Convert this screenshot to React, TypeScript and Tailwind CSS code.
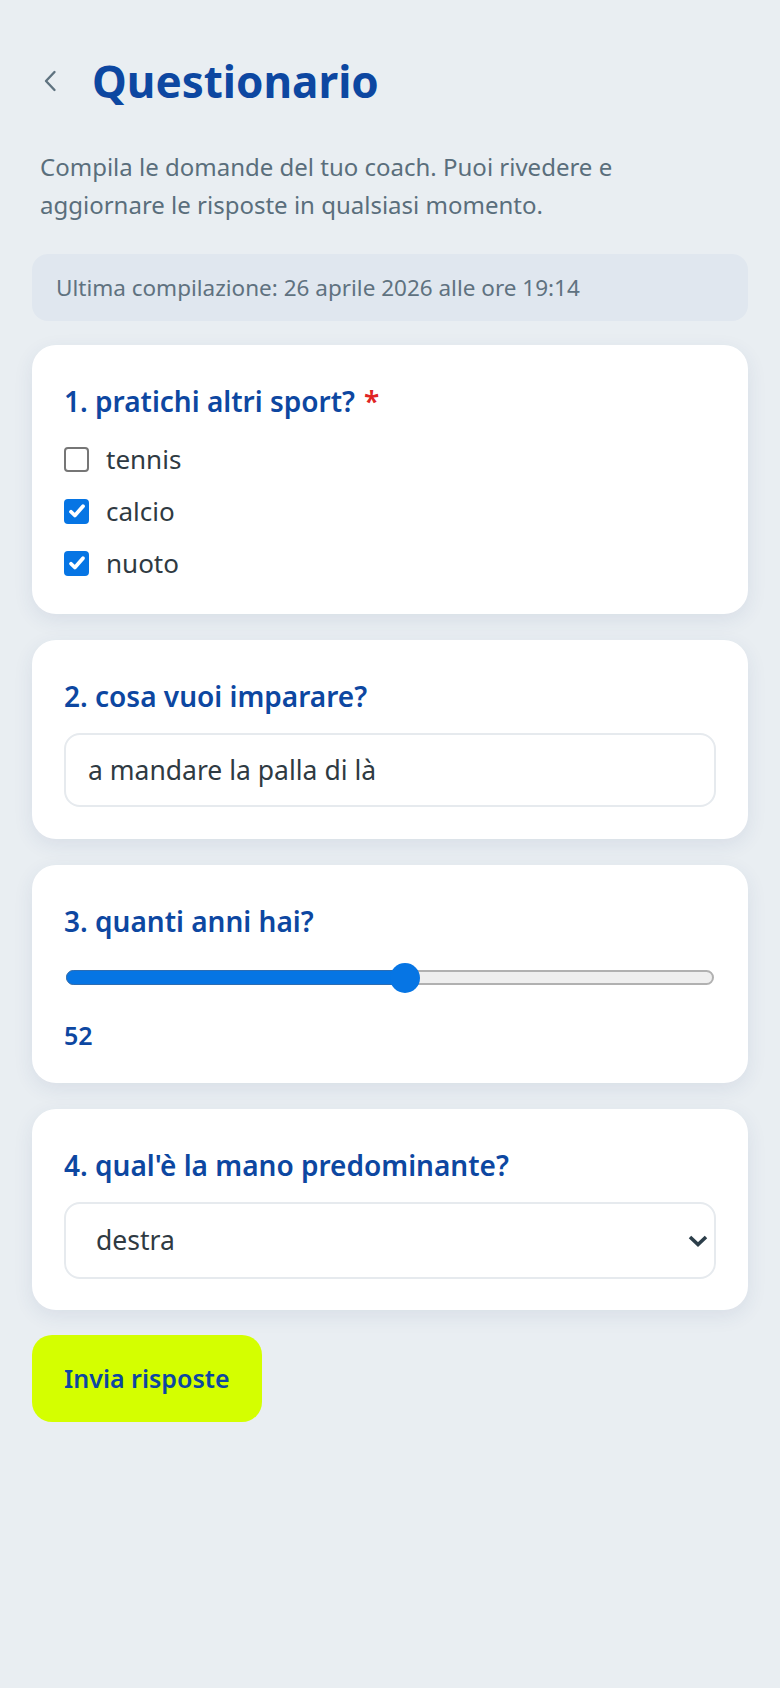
import { useState } from "react";

type Option = { label: string; checked: boolean };

const sports: Option[] = [
  { label: "tennis", checked: false },
  { label: "calcio", checked: true },
  { label: "nuoto", checked: true },
];

function Card({ children, className = "pb-8" }: { children: React.ReactNode; className?: string }) {
  return (
    <section
      className={`rounded-[24px] bg-white px-8 pt-[35px] shadow-[0_6px_20px_rgba(40,70,120,0.09)] ${className}`}
    >
      {children}
    </section>
  );
}

function QuestionTitle({ children, required }: { children: React.ReactNode; required?: boolean }) {
  return (
    <h2 className="text-[28px] font-semibold leading-[42px] text-[#0d47a1]">
      {children}
      {required && <span className="ml-[9px] text-[#e02424]">*</span>}
    </h2>
  );
}

function Checkbox({ checked }: { checked: boolean }) {
  if (!checked) {
    return <span className="h-[25px] w-[25px] shrink-0 rounded-[4px] border-2 border-[#767676] bg-white" />;
  }
  return (
    <span className="flex h-[25px] w-[25px] shrink-0 items-center justify-center rounded-[4px] bg-[#0675e4]">
      <svg viewBox="0 0 16 16" className="h-[20px] w-[20px]" fill="none" stroke="white" strokeWidth={3} strokeLinecap="round" strokeLinejoin="round">
        <path d="M3.2 8.6 6.3 11.6 12.8 4.2" />
      </svg>
    </span>
  );
}

function AgeSlider({ value, min, max }: { value: number; min: number; max: number }) {
  const f = (value - min) / (max - min);
  return (
    <div className="relative mx-[2px] h-[30px]" role="slider" aria-valuenow={value} aria-valuemin={min} aria-valuemax={max}>
      <div className="absolute inset-x-0 top-[7px] h-[15px] rounded-full border-2 border-[#b1b1b1] bg-[#efefef]" />
      <div
        className="absolute left-0 top-[7px] h-[15px] rounded-full border border-[#2d6db3] bg-[#0675e4]"
        style={{ width: `calc(15px + (100% - 30px) * ${f})` }}
      />
      <div
        className="absolute top-0 h-[30px] w-[30px] rounded-full bg-[#0675e4]"
        style={{ left: `calc((100% - 30px) * ${f})` }}
      />
    </div>
  );
}

export default function App() {
  const [age] = useState(52);

  return (
    <div className="min-h-[1688px] bg-[#e9eef2] px-8 pt-[55px] font-['Noto_Sans',sans-serif]">
      <header className="flex h-[52px] items-center gap-[35px] pl-[11px]">
        <svg width="14" height="22" viewBox="0 0 14 22" fill="none" stroke="#5f7380" strokeWidth={2.4} strokeLinecap="round" strokeLinejoin="round">
          <polyline points="11.5,2 3,11 11.5,20" />
        </svg>
        <h1 className="text-[44px] font-bold leading-[52px] text-[#0d47a1]">Questionario</h1>
      </header>

      <p className="mt-[41px] px-2 text-[24px] leading-[38px] text-[#5a6e7c]">
        Compila le domande del tuo coach. Puoi rivedere e aggiornare le risposte in qualsiasi momento.
      </p>

      <div className="mt-[30px] flex h-[67px] items-center rounded-[16px] bg-[#e0e7ef] px-6 text-[22.5px] text-[#5f7280]">
        Ultima compilazione: 26 aprile 2026 alle ore 19:14
      </div>

      <div className="mt-[24px] flex flex-col gap-[26px]">
        <Card className="pb-[25px]">
          <QuestionTitle required>1. pratichi altri sport?</QuestionTitle>
          <ul className="mt-[11px]">
            {sports.map((s) => (
              <li key={s.label} className="flex h-[52px] items-center gap-[17px]">
                <Checkbox checked={s.checked} />
                <span className="text-[26px] text-[#2f3a42]">{s.label}</span>
              </li>
            ))}
          </ul>
        </Card>

        <Card>
          <QuestionTitle>2. cosa vuoi imparare?</QuestionTitle>
          <input
            defaultValue="a mandare la palla di là"
            className="mt-4 h-[74px] w-full rounded-[16px] border-2 border-[#e6eaee] px-[22px] text-[26.5px] text-[#2f3a42] outline-none"
          />
        </Card>

        <Card className="pb-[31px]">
          <QuestionTitle>3. quanti anni hai?</QuestionTitle>
          <div className="mt-[21px]">
            <AgeSlider value={age} min={10} max={90} />
          </div>
          <div className="mt-[25px] text-[25px] font-semibold leading-[34px] text-[#0d47a1]">{age}</div>
        </Card>

        <Card className="pb-[31px]">
          <QuestionTitle>4. qual'è la mano predominante?</QuestionTitle>
          <div className="relative mt-4">
            <select
              defaultValue="destra"
              className="h-[77px] w-full appearance-none rounded-[16px] border-2 border-[#e6eaee] bg-white px-[30px] text-[26.5px] text-[#2f3a42] outline-none"
            >
              <option value="destra">destra</option>
              <option value="sinistra">sinistra</option>
              <option value="entrambe">entrambe</option>
            </select>
            <svg
              className="pointer-events-none absolute right-[8px] top-1/2 -translate-y-1/2"
              width="20"
              height="12"
              viewBox="0 0 20 12"
              fill="none"
              stroke="#2c3e4a"
              strokeWidth={3.6}
              strokeLinejoin="miter"
            >
              <polyline points="2,2 10,9.5 18,2" />
            </svg>
          </div>
        </Card>
      </div>

      <button className="mt-[25px] h-[87px] rounded-[20px] bg-[#d4ff00] px-[32px] text-[25px] font-semibold text-[#0d47a1]">
        Invia risposte
      </button>
    </div>
  );
}
